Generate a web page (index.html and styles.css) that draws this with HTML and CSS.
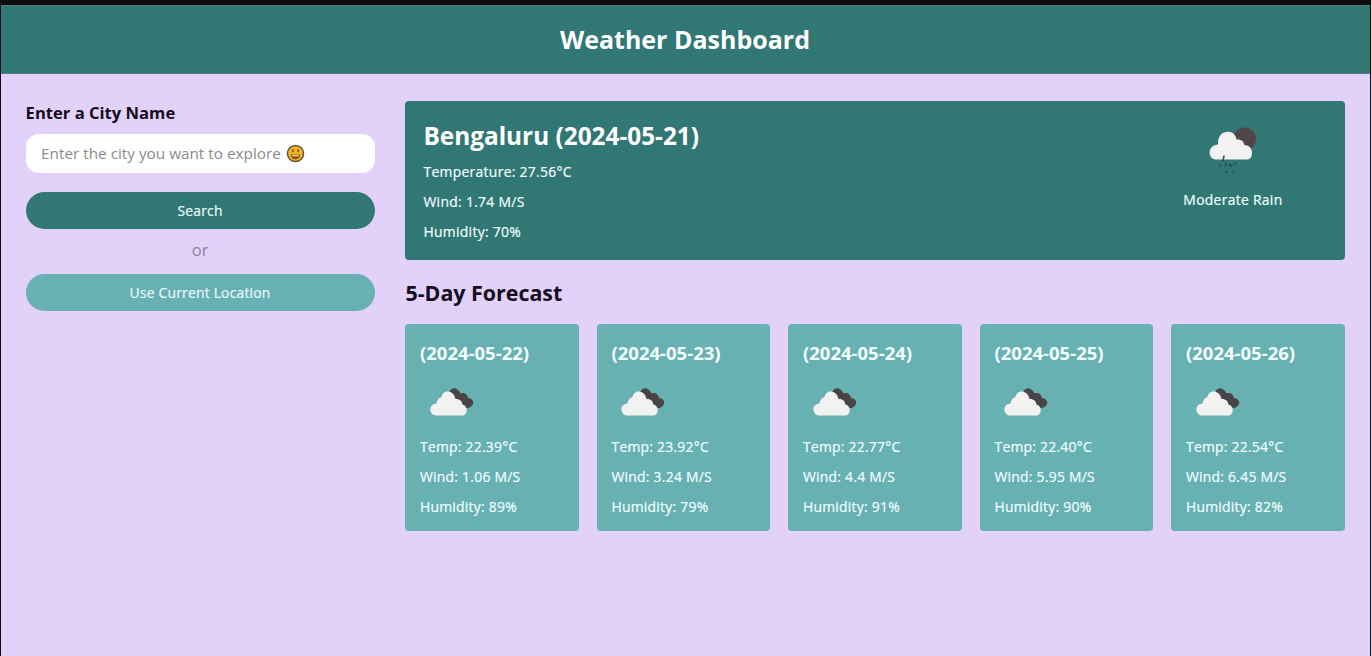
FILE: index.html
```html
<!DOCTYPE html>
<html lang="en">
<head>
<meta charset="utf-8">
<title>Weather Dashboard</title>
<link rel="stylesheet" href="styles.css">
</head>
<body>
<svg class="sprite" width="0" height="0" aria-hidden="true">
  <symbol id="clouds" viewBox="0 0 44 28">
    <path class="dark" d="M19 5C20 0 25-1 28 2c1 1 2 2 2.500 3.500C34 4 37.500 6 38 10c4 .5 6 3 5 6-1 2-3 4-6 4l-9-3-9-9Z"/>
    <path class="light" d="M7 27.500C-1.500 27.500-2 16 6.500 15.500 7 12 8.500 10 11.500 9c1-7.500 12-7.500 14 2 4-.3 6.500 2 7 5.500 5.500.8 6 11-1 11Z"/>
  </symbol>
  <symbol id="rain" viewBox="0 0 48 46">
    <circle class="dusk" cx="35.500" cy="12" r="11.500"/>
    <path class="light" d="M8 32.500C-2 32.500-2 18.500 9 17.500 8 2 26 1 27.500 12.500c4-.6 7.500 1.500 7.800 5.500 4.200 0 7.700 3 7.700 7.500 0 4.500-2 7-5 7Z"/>
    <path class="drops" d="m15 29-1 5m-2 4-1 1m6-3-1 3m5-2-1 2m7-3-1 1m-3 1-1 1m-4 6-1 1m8-2-1 1"/>
  </symbol>
  <symbol id="grin" viewBox="0 0 20 20">
    <circle cx="10" cy="10" r="8.500" fill="#f2b52b" stroke="#62563c" stroke-width="1.500"/>
    <path d="M5 11h10c-.3 3.500-2 5-5 5s-4.700-1.500-5-5Z" fill="#8b4c1b"/>
    <path d="M6.500 11.500h7v1.500h-7Z" fill="#f8d67c"/>
    <path d="M7.200 6v2m5.600-2v2" stroke="#6b4818" stroke-width="1.500" stroke-linecap="round"/>
  </symbol>
</svg>
<div class="page">
  <header class="header"><h1 class="title">Weather Dashboard</h1></header>
  <main class="container">
    <section class="search">
      <h2 class="label">Enter a City Name</h2>
      <div class="field"><span>Enter the city you want to explore</span><svg class="emoji"><use href="#grin"/></svg></div>
      <button class="button">Search</button>
      <div class="or">or</div>
      <button class="button location">Use Current Location</button>
    </section>
    <section class="weather">
      <div class="current">
        <div>
          <h2 class="city">Bengaluru (2024-05-21)</h2>
          <p class="reading">Temperature: 27.56°C</p>
          <p class="reading">Wind: 1.74 M/S</p>
          <p class="reading">Humidity: 70%</p>
        </div>
        <div class="condition"><svg class="rain"><use href="#rain"/></svg><p class="reading description">Moderate Rain</p></div>
      </div>
      <h2 class="heading">5-Day Forecast</h2>
      <div class="cards">
        <article class="card"><h3 class="date">(2024-05-22)</h3><svg class="clouds"><use href="#clouds"/></svg><p class="reading">Temp: 22.39°C</p><p class="reading">Wind: 1.06 M/S</p><p class="reading">Humidity: 89%</p></article>
        <article class="card"><h3 class="date">(2024-05-23)</h3><svg class="clouds"><use href="#clouds"/></svg><p class="reading">Temp: 23.92°C</p><p class="reading">Wind: 3.24 M/S</p><p class="reading">Humidity: 79%</p></article>
        <article class="card"><h3 class="date">(2024-05-24)</h3><svg class="clouds"><use href="#clouds"/></svg><p class="reading">Temp: 22.77°C</p><p class="reading">Wind: 4.4 M/S</p><p class="reading">Humidity: 91%</p></article>
        <article class="card"><h3 class="date">(2024-05-25)</h3><svg class="clouds"><use href="#clouds"/></svg><p class="reading">Temp: 22.40°C</p><p class="reading">Wind: 5.95 M/S</p><p class="reading">Humidity: 90%</p></article>
        <article class="card"><h3 class="date">(2024-05-26)</h3><svg class="clouds"><use href="#clouds"/></svg><p class="reading">Temp: 22.54°C</p><p class="reading">Wind: 6.45 M/S</p><p class="reading">Humidity: 82%</p></article>
      </div>
    </section>
  </main>
</div>
</body>
</html>
```
FILE: styles.css
```css
* { box-sizing: border-box; margin: 0; padding: 0; }
html { background: #0d0d0d; }
body { height: 656px; overflow: hidden; padding: 5px 1px 0; background: #0d0d0d; font-family: "Open Sans", sans-serif; }
.sprite { position: absolute; }
.dark { fill: #484448; }
.dusk { fill: #514548; }
.light { fill: #f2f2f2; }
.drops { fill: none; stroke: #294c50; stroke-width: 1.500; stroke-linecap: round; }
.page { height: 651px; background: #e2d1f9; }
.header { height: 69px; display: flex; align-items: center; justify-content: center; padding: 0 1px 1px 0; background: #317773; border-top: 1px solid #527f7c; border-bottom: 1px solid #4f7f86; }
.title { color: #fff; font-size: 25px; line-height: 34px; font-weight: 700; }
.container { display: grid; grid-template-columns: 349px 939.500px; gap: 30.900px; padding: 27px 24px 0 24.600px; }
.search { display: flex; flex-direction: column; }
.label { font-size: 16.600px; line-height: 24px; font-weight: 700; color: #150c20; margin-bottom: 9px; }
.field { height: 39px; display: flex; align-items: center; gap: 5px; padding: 0 15.500px 1px; border-radius: 13px; background: #fff; color: #8b8b8b; font-size: 15.300px; margin-bottom: 19px; }
.emoji { width: 19px; height: 19px; }
.button { height: 37px; border: 0; border-radius: 19px; background: #317773; color: #e9fafa; font: 500 13.900px "Open Sans", sans-serif; letter-spacing: 0.200px; padding-bottom: 1px; -webkit-text-stroke: 0.200px currentColor; }
.or { height: 45px; display: flex; align-items: center; justify-content: center; color: #8e7f9e; font-size: 16.500px; padding-bottom: 5px; }
.location { background: #67b1b3; }
.current { height: 159px; display: flex; justify-content: space-between; padding: 18px 62.500px 0 18px; border-radius: 4px; background: #317773; }
.city { color: #fff; font-size: 24.350px; line-height: 34px; font-weight: 700; margin-bottom: 4.400px; }
.reading { color: #f2ffff; font-size: 13.900px; line-height: 30px; font-weight: 500; letter-spacing: 0.300px; -webkit-text-stroke: 0.200px currentColor; }
.condition { display: flex; flex-direction: column; align-items: center; }
.rain { width: 48px; height: 46px; margin: 8px 0 0; }
.description { margin-top: 12px; }
.heading { color: #150c20; font-size: 21.400px; line-height: 28px; font-weight: 700; margin: 19px 0 17px; }
.cards { display: grid; grid-template-columns: repeat(5, 1fr); gap: 18px; }
.card { height: 207px; padding: 15px 14.500px; border-radius: 4px; background: #67b1b3; }
.date { color: #f4ffff; font-size: 18.500px; line-height: 28px; font-weight: 700; }
.clouds { display: block; width: 44px; height: 28px; margin: 21px 0 16px 10px; }
.card .reading { letter-spacing: 0.250px; }
```
